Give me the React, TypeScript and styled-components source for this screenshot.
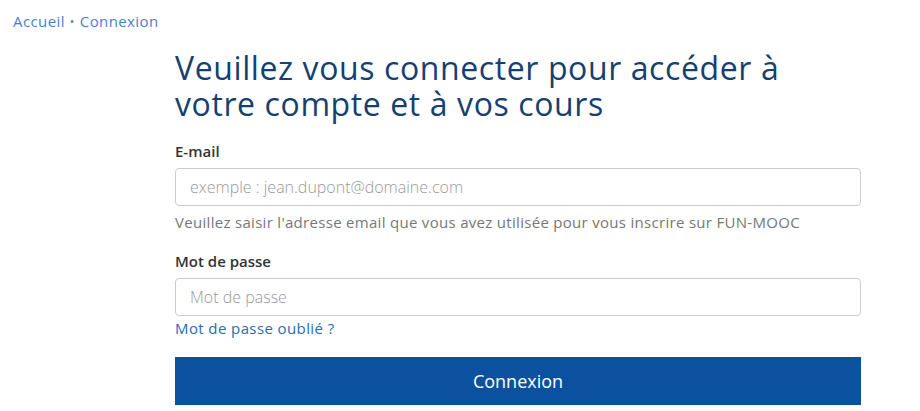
import React from 'react';
import styled, { createGlobalStyle } from 'styled-components';

const GlobalStyle = createGlobalStyle`
  body {
    margin: 0;
    background: #fff;
    font-family: "Open Sans", Lato, sans-serif;
  }
`;

const Page = styled.div`
  width: 920px;
  height: 411px;
  overflow: hidden;
`;

const Breadcrumb = styled.nav`
  display: flex;
  align-items: center;
  gap: 5px;
  padding: 12px 0 0 13px;
  height: 18px;
  font-size: 15px;
  line-height: 18px;
  letter-spacing: 0.4px;
  color: #4a7fcf;
`;

const Crumb = styled.a`
  color: inherit;
  text-decoration: none;
`;

const Dot = styled.span`
  font-size: 12px;
  line-height: 1;
  padding-top: 2px;
`;

const Main = styled.main`
  width: 686px;
  margin: 20px 0 0 175px;
`;

const Title = styled.h1`
  margin: 0 0 19px;
  font-size: 32px;
  line-height: 36px;
  font-weight: 400;
  letter-spacing: 0.6px;
  color: #163f72;
`;

const Field = styled.div<{ $gap?: number }>`
  display: flex;
  flex-direction: column;
  margin-bottom: ${(p) => p.$gap ?? 0}px;
`;

const Label = styled.label`
  font-size: 15px;
  font-weight: 600;
  line-height: 20px;
  color: #333;
  margin-bottom: 7px;
`;

const Input = styled.input`
  box-sizing: border-box;
  width: 100%;
  height: 38px;
  padding: 0 14px;
  border: 1px solid #ccc;
  border-radius: 4px;
  font-family: inherit;
  font-size: 16px;
  color: #333;
  &::placeholder {
    color: #999;
    font-weight: 300;
  }
`;

const Help = styled.p`
  margin: 5px 0 0;
  font-size: 15px;
  line-height: 22px;
  letter-spacing: 0.3px;
  color: #777;
`;

const Forgot = styled.a`
  margin-top: 2px;
  font-size: 15px;
  line-height: 20px;
  letter-spacing: 0.4px;
  color: #2a6bb5;
  text-decoration: none;
  align-self: flex-start;
`;

const Submit = styled.button`
  width: 100%;
  height: 48px;
  border: none;
  background: #0b519f;
  color: #fff;
  font-family: inherit;
  font-size: 18px;
  cursor: pointer;
`;

export default function App() {
  return (
    <Page>
      <GlobalStyle />
      <Breadcrumb>
        <Crumb href="#">Accueil</Crumb>
        <Dot>•</Dot>
        <Crumb href="#">Connexion</Crumb>
      </Breadcrumb>
      <Main>
        <Title>
          Veuillez vous connecter pour accéder à<br />
          votre compte et à vos cours
        </Title>
        <Field $gap={18}>
          <Label htmlFor="email">E-mail</Label>
          <Input id="email" type="email" placeholder="exemple : jean.dupont@domaine.com" />
          <Help>Veuillez saisir l'adresse email que vous avez utilisée pour vous inscrire sur FUN-MOOC</Help>
        </Field>
        <Field $gap={19}>
          <Label htmlFor="password">Mot de passe</Label>
          <Input id="password" type="password" placeholder="Mot de passe" />
          <Forgot href="#">Mot de passe oublié ?</Forgot>
        </Field>
        <Submit type="submit">Connexion</Submit>
      </Main>
    </Page>
  );
}
